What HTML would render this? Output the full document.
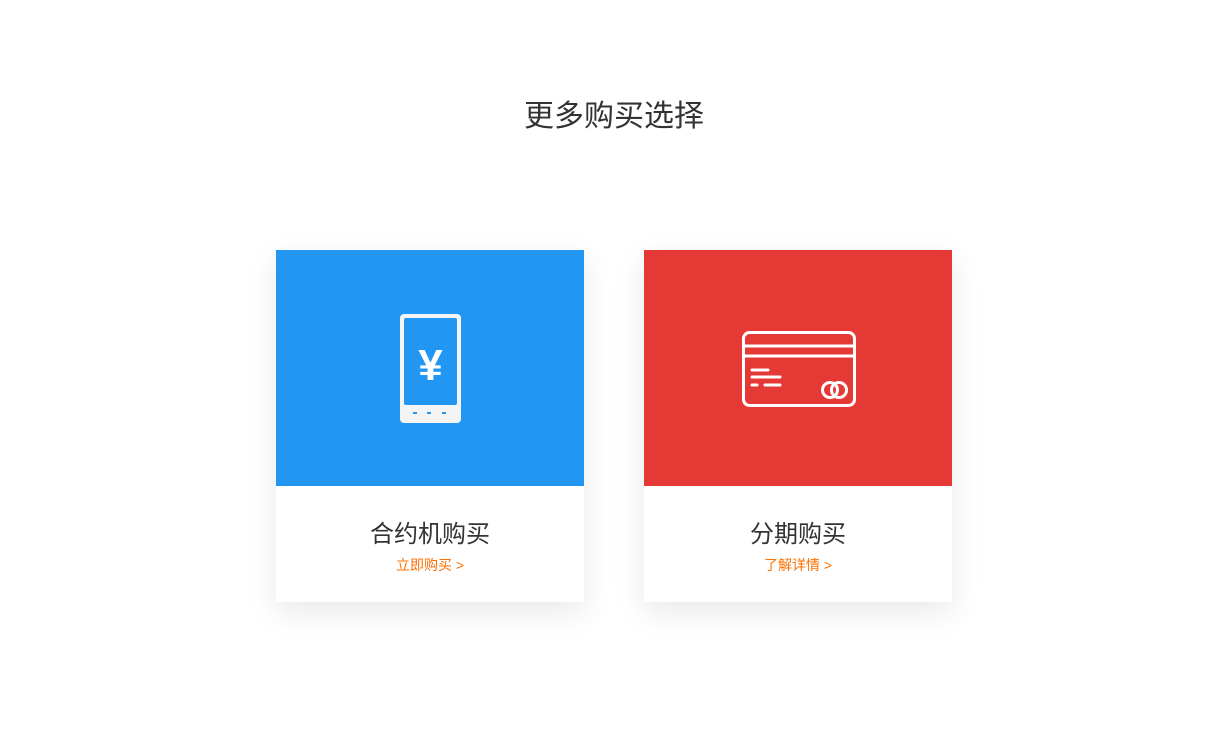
<!DOCTYPE html>
<html><head><meta charset="utf-8"><style>
body{margin:0;width:1226px;height:732px;background:#fff;font-family:"Liberation Sans","Noto Sans CJK SC",sans-serif;position:relative;overflow:hidden}
h1{position:absolute;top:97px;left:1px;width:1226px;text-align:center;margin:0;font-size:30px;font-weight:normal;color:#333;line-height:40px}
.card{position:absolute;top:250px;width:308px;height:352px;background:#fff;box-shadow:0 10px 30px rgba(0,0,0,0.09)}
.top{height:236px;position:relative}
.name{position:absolute;top:268px;width:100%;text-align:center;font-size:24px;color:#333;line-height:34px}
.link{position:absolute;top:305px;width:100%;text-align:center;font-size:14px;color:#ff6f00;line-height:20px}
svg{position:absolute;left:0;top:0}
</style></head><body>
<h1>更多购买选择</h1>
<div class="card" style="left:276px">
<div class="top" style="background:#2196f3">
<svg width="308" height="236">
<rect x="124" y="64" width="61" height="109" rx="4" fill="#f4f4f4"/>
<rect x="128" y="68" width="53" height="87" rx="2" fill="#2196f3"/>
<rect x="137" y="162" width="4" height="2" fill="#2196f3"/>
<rect x="151" y="162" width="4" height="2" fill="#2196f3"/>
<rect x="166" y="162" width="4" height="2" fill="#2196f3"/>
<text x="154.5" y="130" text-anchor="middle" font-size="44" font-weight="bold" fill="#fff" font-family="Liberation Sans,sans-serif">¥</text>
</svg></div>
<div class="name">合约机购买</div>
<div class="link">立即购买 &gt;</div>
</div>
<div class="card" style="left:644px">
<div class="top" style="background:#e53935">
<svg width="308" height="236" fill="none" stroke="#fff" stroke-width="3" stroke-linecap="round">
<rect x="99.5" y="82.5" width="111" height="73" rx="6"/>
<line x1="100" y1="96" x2="210" y2="96"/>
<line x1="100" y1="106" x2="210" y2="106"/>
<line x1="108" y1="120" x2="124" y2="120"/>
<line x1="108" y1="127" x2="136" y2="127"/>
<line x1="108" y1="135" x2="113" y2="135"/>
<line x1="121" y1="135" x2="136" y2="135"/>
<circle cx="186" cy="140" r="7.5"/>
<circle cx="195" cy="140" r="7.5"/>
</svg></div>
<div class="name">分期购买</div>
<div class="link">了解详情 &gt;</div>
</div>
</body></html>
